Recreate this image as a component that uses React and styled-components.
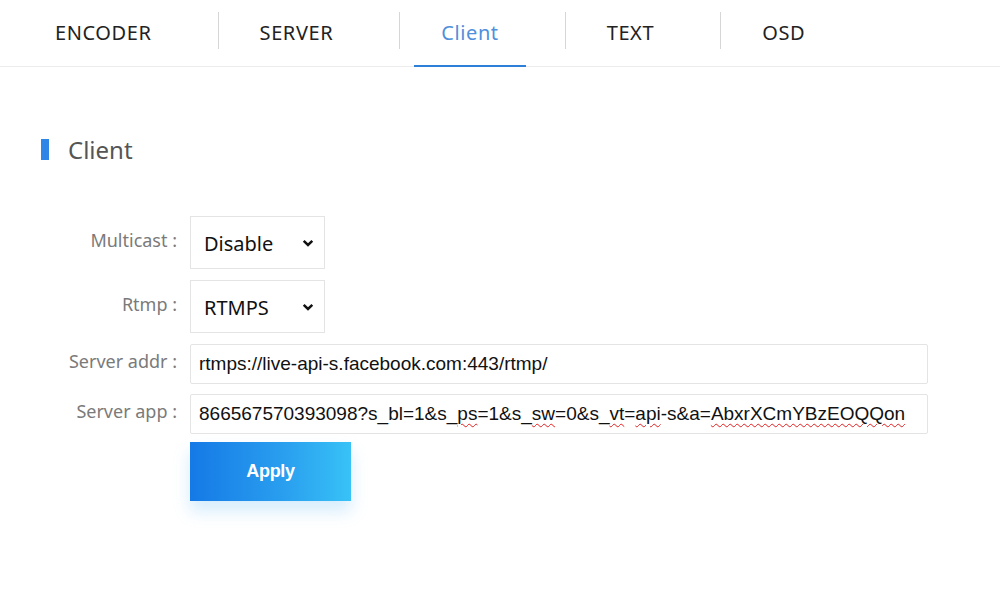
import React, { useState } from 'react';
import styled, { createGlobalStyle } from 'styled-components';

const TABS = ['ENCODER', 'SERVER', 'Client', 'TEXT', 'OSD'];

const GlobalStyle = createGlobalStyle`
  html, body {
    margin: 0;
    padding: 0;
    background: #fff;
  }
  body {
    font-family: 'Noto Sans', 'Open Sans', sans-serif;
  }
`;

function Chevron() {
  return (
    <svg width="12" height="8" viewBox="0 0 12 8">
      <path d="M1.7 1.8 L6 6 L10.3 1.8" fill="none" stroke="#111" strokeWidth="2.5" />
    </svg>
  );
}

// spell-check squiggle parts of the app string
const APP_PARTS = [
  ['866567570393098?s_bl=1&s_', false],
  ['ps', true],
  ['=1&s_', false],
  ['sw', true],
  ['=0&s_', false],
  ['vt', true],
  ['=', false],
  ['api', true],
  ['-s&a=', false],
  ['AbxrXCmYBzEOQQon', true],
];

function App() {
  const [active, setActive] = useState('Client');

  return (
    <>
      <GlobalStyle />
      <Page>
        <TabBar>
          {TABS.map((t, i) => (
            <React.Fragment key={t}>
              {i > 0 && <TabDivider />}
              <Tab $active={active === t} onClick={() => setActive(t)}>
                {t}
              </Tab>
            </React.Fragment>
          ))}
        </TabBar>

        <Section>
          <SectionTitle>Client</SectionTitle>

          <Form>
            <Row $gap={11}>
              <Label>Multicast :</Label>
              <SelectBox>
                <span>Disable</span>
                <Chevron />
              </SelectBox>
            </Row>
            <Row $gap={11}>
              <Label>Rtmp :</Label>
              <SelectBox>
                <span>RTMPS</span>
                <Chevron />
              </SelectBox>
            </Row>
            <Row $gap={10}>
              <Label>Server addr :</Label>
              <Field>rtmps://live-api-s.facebook.com:443/rtmp/</Field>
            </Row>
            <Row $gap={8}>
              <Label>Server app :</Label>
              <Field>
                {APP_PARTS.map(([txt, bad], i) =>
                  bad ? <Misspelled key={i}>{txt}</Misspelled> : <span key={i}>{txt}</span>,
                )}
              </Field>
            </Row>
            <Row>
              <Label />
              <ApplyBtn>Apply</ApplyBtn>
            </Row>
          </Form>
        </Section>
      </Page>
    </>
  );
}

const Page = styled.div`
  width: 1000px;
  height: 592px;
  overflow: hidden;
  background: #fff;
`;

const TabBar = styled.nav`
  display: flex;
  align-items: stretch;
  height: 66px;
  padding-left: 28px;
  border-bottom: 1px solid #ececec;
`;

const Tab = styled.div`
  display: flex;
  align-items: center;
  padding: 0 27px 1px;
  margin-bottom: -1px;
  font-size: 20px;
  letter-spacing: 0.6px;
  color: ${(p) => (p.$active ? '#4f8fdb' : '#222')};
  border-bottom: 2px solid ${(p) => (p.$active ? '#2e7fd8' : 'transparent')};
  cursor: pointer;
`;

const TabDivider = styled.span`
  width: 1px;
  height: 37px;
  margin: 12px 14px 0 39px;
  background: #d6d6d6;
`;

const Section = styled.section`
  padding: 67px 0 0 41px;
`;

const SectionTitle = styled.h2`
  display: flex;
  align-items: center;
  gap: 19px;
  margin: 0;
  height: 30px;
  font-size: 24px;
  font-weight: 400;
  color: #555;
  &::before {
    content: '';
    width: 8px;
    height: 21px;
    background: #2f86e6;
  }
`;

const Form = styled.div`
  display: flex;
  flex-direction: column;
  margin-top: 52px;
`;

const Row = styled.div`
  display: flex;
  align-items: center;
  gap: 13px;
  margin-bottom: ${(p) => p.$gap || 0}px;
`;

const Label = styled.label`
  width: 136px;
  text-align: right;
  font-size: 18px;
  color: #7a7a7a;
  transform: translateY(-3px);
`;

const SelectBox = styled.div`
  box-sizing: border-box;
  width: 135px;
  height: 53px;
  display: flex;
  align-items: center;
  justify-content: space-between;
  padding: 0 10px 0 13px;
  border: 1px solid #e4e4e4;
  font-size: 20px;
  color: #111;
  & span {
    padding-top: 1px;
  }
`;

const Field = styled.div`
  box-sizing: border-box;
  width: 738px;
  height: 40px;
  display: flex;
  align-items: center;
  padding: 0 8px;
  border: 1px solid #e4e4e4;
  border-radius: 2px;
  font-family: 'Liberation Sans', Arial, sans-serif;
  font-size: 19px;
  color: #111;
  white-space: nowrap;
  overflow: hidden;
`;

const Misspelled = styled.span`
  text-decoration: underline wavy #e02020;
  text-decoration-thickness: 1px;
  text-underline-offset: 3px;
`;

const ApplyBtn = styled.button`
  width: 161px;
  height: 59px;
  border: none;
  background: linear-gradient(90deg, #1579e6 0%, #2aa0ef 60%, #38c2f7 100%);
  color: #fff;
  font-family: 'Liberation Sans', Arial, sans-serif;
  font-size: 18px;
  font-weight: 700;
  letter-spacing: -0.3px;
  box-shadow: 0 10px 16px rgba(60, 170, 240, 0.22);
  cursor: pointer;
`;

export default App;
